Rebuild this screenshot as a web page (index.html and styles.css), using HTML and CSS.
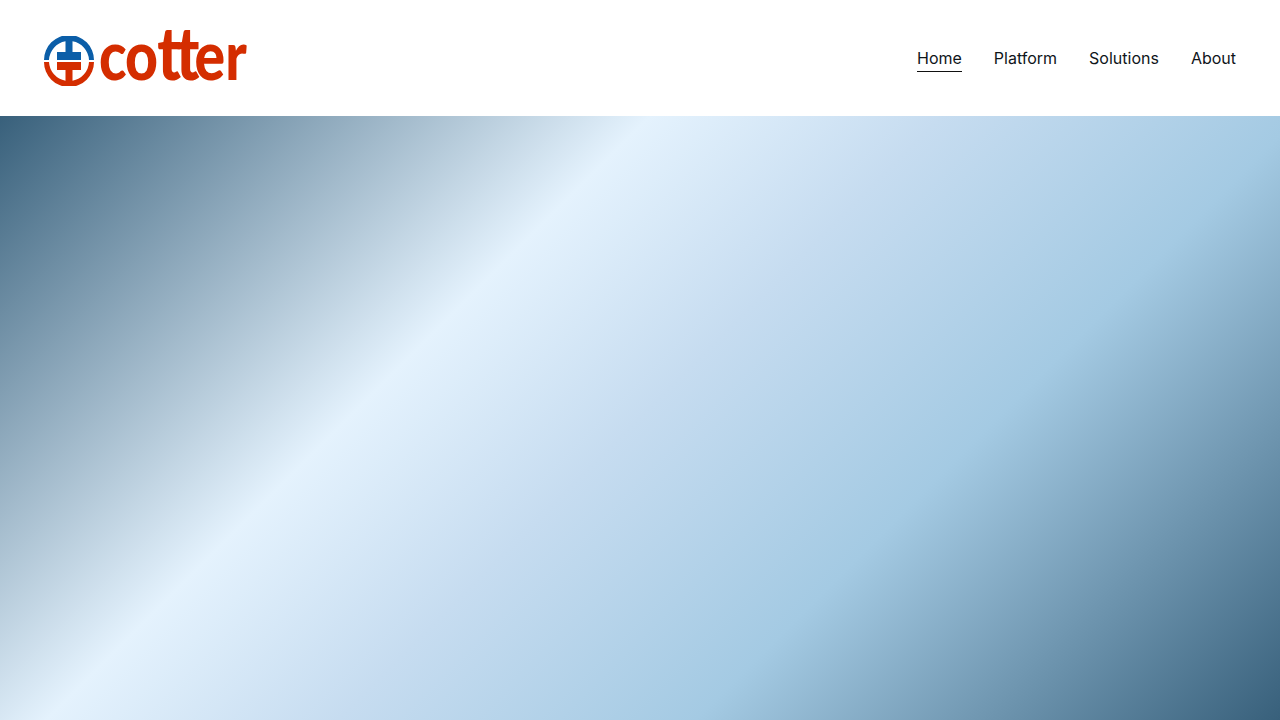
FILE: index.html
```html
<!DOCTYPE html>
<html lang="en">
<head>
<meta charset="utf-8">
<title>Cotter</title>
<link rel="stylesheet" href="styles.css">
</head>
<body>
<header class="site-header">
  <a class="logo" href="#">
    <svg class="logo-mark" width="50" height="50" viewBox="0 0 50 50" aria-hidden="true">
      <path class="blue" d="M0 24A25 25 0 0 1 50 24L45 24A20 20 0 0 0 28.500 5.300V16H37V24H13V16H21.500V5.300A20 20 0 0 0 5 24Z"/>
      <path class="red" d="M0 26A25 25 0 0 0 50 26L45 26A20 20 0 0 1 28.500 44.700V34H37V26H13V34H21.500V44.700A20 20 0 0 1 5 26Z"/>
    </svg>
    <span class="logo-word"><span class="l-c">c</span><span class="l-o">o</span><span class="l-t">t</span><span class="l-t">t</span><span class="l-e">e</span><span class="l-r">r</span></span>
  </a>
  <nav class="nav">
    <a class="nav-link active" href="#">Home</a>
    <a class="nav-link" href="#">Platform</a>
    <a class="nav-link" href="#">Solutions</a>
    <a class="nav-link" href="#">About</a>
  </nav>
</header>
<main class="hero"></main>
</body>
</html>
```
FILE: styles.css
```css
* { box-sizing: border-box; }
html, body { margin: 0; height: 100%; }
body {
  display: flex;
  flex-direction: column;
  font-family: Inter, "Liberation Sans", sans-serif;
  background: #fff;
  overflow: hidden;
}
.site-header {
  height: 116px;
  flex: none;
  display: flex;
  align-items: center;
  justify-content: space-between;
  padding: 0 44px;
  background: #fff;
}
.logo {
  display: flex;
  align-items: flex-start;
  gap: 5px;
  height: 50px;
  margin-top: 6px;
  text-decoration: none;
}
.logo-mark { flex: none; }
.logo-mark .blue { fill: #0b5ea8; }
.logo-mark .red { fill: #d42d00; }
.logo-word {
  display: flex;
  align-items: baseline;
  font-family: Lato, sans-serif;
  font-weight: 900;
  font-size: 68px;
  line-height: 30px;
  color: #d42d00;
  transform: scaleX(0.84);
  transform-origin: left center;
}
.l-c { letter-spacing: -2px; }
.l-o { letter-spacing: -1px; }
.l-t { font-size: 75px; letter-spacing: -6px; }
.l-e { letter-spacing: 0; }
.l-r { letter-spacing: 0; }
.nav { display: flex; gap: 32px; margin-top: 1px; }
.nav-link {
  font-size: 16px;
  line-height: 24px;
  color: #0f151a;
  text-decoration: none;
  border-bottom: 1px solid transparent;
  padding: 1px 0;
}
.nav-link.active { border-bottom-color: #111; }
.hero {
  flex: 1;
  background: linear-gradient(135deg, #38607b 0%, #e4f2fd 34.500%, #c6dcf0 50%, #a4cae3 69%, #38607b 100%);
}
```
